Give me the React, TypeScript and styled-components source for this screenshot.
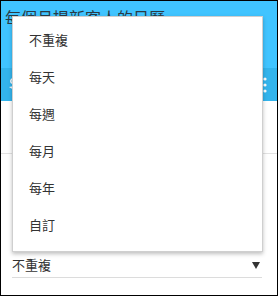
import React from "react";
import styled, { createGlobalStyle } from "styled-components";

const Global = createGlobalStyle`
  html, body { margin: 0; padding: 0; background: #fff; }
  body { font-family: "Noto Sans CJK TC", "Noto Sans", sans-serif; }
`;

const Frame = styled.div`
  position: relative;
  width: 276px;
  height: 294px;
  border: 1px solid #000;
  background: #fff;
  overflow: hidden;
  display: flex;
  flex-direction: column;
`;

const Header = styled.div`
  height: 67px;
  background: #40c4ff;
  padding: 5px 0 0 4px;
  box-sizing: border-box;
`;

const Title = styled.div`
  font-size: 16px;
  line-height: 22px;
  color: #2b3a44;
  white-space: nowrap;
`;

const Toolbar = styled.div`
  height: 33px;
  background: #33b4ec;
  display: flex;
  align-items: center;
  justify-content: space-between;
  padding: 0 10px 0 7px;
  box-sizing: border-box;
`;

const Section = styled.div`
  height: 52px;
  border-bottom: 1px solid #e2e2e2;
`;

const Body = styled.div`
  flex: 1;
  padding: 99px 15px 0 11px;
`;

const SelectField = styled.div`
  display: flex;
  align-items: center;
  justify-content: space-between;
  height: 24px;
  border-bottom: 1px solid #dcdcdc;
  font-size: 13px;
  color: #333;
`;

const Value = styled.span`
  position: relative;
  top: -1px;
`;

const Caret = styled.span`
  width: 0;
  height: 0;
  border-left: 4px solid transparent;
  border-right: 4px solid transparent;
  border-top: 7px solid #333;
  margin-right: 2px;
`;

const Menu = styled.ul`
  position: absolute;
  left: 11px;
  top: 15px;
  width: 249px;
  margin: 0;
  padding: 4px 0 8px;
  list-style: none;
  background: #fff;
  border: 1px solid #cfcfcf;
  box-shadow: 0 2px 4px rgba(0, 0, 0, 0.25);
`;

const Item = styled.li`
  height: 37px;
  display: flex;
  align-items: center;
  padding-left: 16px;
  font-size: 13px;
  color: #333;
`;

const options = ["不重複", "每天", "每週", "每月", "每年", "自訂"];

export default function App() {
  return (
    <>
      <Global />
      <Frame>
        <Header>
          <Title>每個月提新客人的日曆</Title>
        </Header>
        <Toolbar>
          <svg width="8" height="14" viewBox="0 0 8 14">
            <circle cx="5" cy="3" r="2.2" fill="none" stroke="#fff" strokeWidth="1.4" />
            <path d="M1 9 L6 12 L6 8 Z" fill="#fff" />
          </svg>
          <svg width="4" height="16" viewBox="0 0 4 16">
            <circle cx="2" cy="2" r="1.6" fill="#fff" />
            <circle cx="2" cy="8" r="1.6" fill="#fff" />
            <circle cx="2" cy="14" r="1.6" fill="#fff" />
          </svg>
        </Toolbar>
        <Section />
        <Body>
          <SelectField>
            <Value>不重複</Value>
            <Caret />
          </SelectField>
        </Body>
        <Menu>
          {options.map((o) => (
            <Item key={o}>{o}</Item>
          ))}
        </Menu>
      </Frame>
    </>
  );
}
